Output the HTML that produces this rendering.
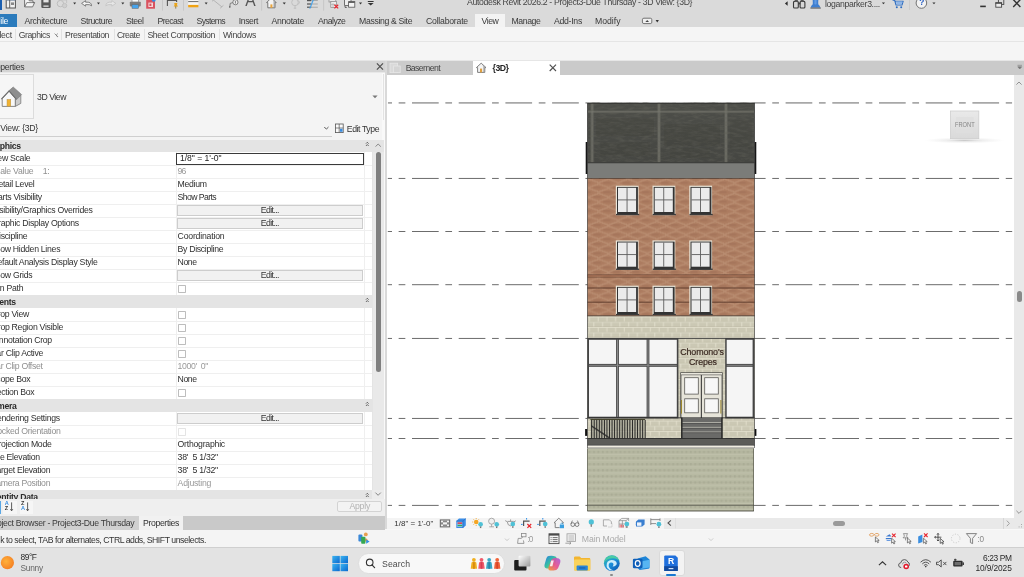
<!DOCTYPE html>
<html><head><meta charset="utf-8"><title>Revit</title>
<style>
html,body{margin:0;padding:0}
body{width:1024px;height:577px;overflow:hidden;position:relative;background:#f5f5f5;font-family:"Liberation Sans",sans-serif;}
.t{position:absolute;white-space:pre;display:block}
.b{position:absolute}
svg{position:absolute;left:0;top:0;overflow:visible}
</style></head><body><div id="root" style="position:absolute;left:0;top:0;width:1024px;height:577px;will-change:transform">
<div class="b" style="left:0px;top:0px;width:1024px;height:27px;background:#dadada;"></div>
<div class="b" style="left:0px;top:0px;width:1.5px;height:10px;background:#1b5fb0;"></div>
<div class="b" style="left:0px;top:14px;width:17px;height:13px;background:#2b7bbc;"></div>
<div class="b" style="left:475px;top:14px;width:30px;height:13px;background:#f3f3f3;"></div>
<div class="b" style="left:0px;top:27px;width:1024px;height:33px;background:#f5f5f5;"></div>
<div class="b" style="left:0px;top:41px;width:1024px;height:1.4px;background:#e5e5e5;"></div>
<div class="b" style="left:14.6px;top:29px;width:1px;height:11px;background:#e2e2e2;"></div>
<div class="b" style="left:61.3px;top:29px;width:1px;height:11px;background:#e2e2e2;"></div>
<div class="b" style="left:113.6px;top:29px;width:1px;height:11px;background:#e2e2e2;"></div>
<div class="b" style="left:143.7px;top:29px;width:1px;height:11px;background:#e2e2e2;"></div>
<div class="b" style="left:219.4px;top:29px;width:1px;height:11px;background:#e2e2e2;"></div>
<div class="b" style="left:0px;top:60px;width:1024px;height:1px;background:#e6e6e6;"></div>
<div class="b" style="left:0px;top:61px;width:385px;height:11.4px;background:#d4d4d4;"></div>
<div class="b" style="left:0px;top:72.4px;width:385px;height:1px;background:#e8e8e8;"></div>
<div class="b" style="left:384.8px;top:61px;width:2.2px;height:469px;background:#d9d9d9;"></div>
<div class="b" style="left:387px;top:61px;width:637px;height:13.7px;background:#cacaca;"></div>
<div class="b" style="left:387px;top:61px;width:86px;height:13.7px;background:#cbcbcb;"></div>
<div class="b" style="left:472.9px;top:61.4px;width:87px;height:13.4px;background:#ffffff;"></div>
<div class="b" style="left:0px;top:73px;width:385px;height:443px;background:#f4f4f4;"></div>
<div class="b" style="left:0px;top:74.2px;width:33.6px;height:44.4px;background:#f6f6f6;border:1px solid #dcdcdc;border-left:none;box-sizing:border-box"></div>
<div class="b" style="left:382.4px;top:73.4px;width:2.4px;height:443px;background:#f9f9f9;"></div>
<div class="b" style="left:383px;top:74px;width:0.8px;height:46px;background:#e2e2e2;"></div>
<div class="b" style="left:0px;top:136px;width:332px;height:1px;background:#cfcfcf;"></div>
<div class="b" style="left:0px;top:140px;width:372px;height:350px;background:#ffffff;"></div>
<div class="b" style="left:372px;top:140px;width:12px;height:359px;background:#e9e9e9;"></div>
<div class="b" style="left:0px;top:140px;width:384px;height:11.5px;background:#e4e4e4;"></div>
<div class="b" style="left:0;top:139px;width:385px;height:360px;overflow:hidden">
<div class="b" style="left:175.8px;top:12px;width:0.8px;height:339px;background:#efefef;"></div>
<div class="b" style="left:363.8px;top:12px;width:0.8px;height:339px;background:#efefef;"></div>
<div class="b" style="left:371.6px;top:12px;width:0.8px;height:339px;background:#e4e4e4;"></div>
<div class="b" style="left:0px;top:1.3px;width:372px;height:11.4px;background:#e4e4e4;"></div>
<span class="t" style="left:-14.35px;top:1.14px;font-size:8.7px;line-height:12.18px;letter-spacing:-0.320px;color:#2b2b2b;font-weight:bold;">Graphics</span>
<svg width="385" height="360"><path d="M366.0 4.6 L367.3 3.3 L368.6 4.6 M366.0 6.9 L367.3 5.6 L368.6 6.9" fill="none" stroke="#444" stroke-width="0.85"/></svg>
<div class="b" style="left:0px;top:26.2px;width:372px;height:0.8px;background:#efefef;"></div>
<span class="t" style="left:-9.68px;top:13.14px;font-size:8.7px;line-height:12.18px;letter-spacing:-0.280px;color:#2f2f2f;">View Scale</span>
<div class="b" style="left:176.3px;top:13.5px;width:187.5px;height:12.2px;background:#fff;border:1px solid #3a3a3a;box-sizing:border-box"></div>
<span class="t" style="left:180.00px;top:13.41px;font-size:8.6px;line-height:12.04px;letter-spacing:-0.036px;color:#222;">1/8" = 1'-0"</span>
<div class="b" style="left:0px;top:39.2px;width:372px;height:0.8px;background:#efefef;"></div>
<span class="t" style="left:-9.41px;top:26.14px;font-size:8.7px;line-height:12.18px;letter-spacing:-0.280px;color:#8f8f8f;">Scale Value</span>
<span class="t" style="left:42.80px;top:26.14px;font-size:8.7px;line-height:12.18px;letter-spacing:-0.280px;color:#8f8f8f;">1:</span>
<span class="t" style="left:177.60px;top:26.14px;font-size:8.7px;line-height:12.18px;letter-spacing:-0.889px;color:#9a9a9a;">96</span>
<div class="b" style="left:0px;top:52.2px;width:372px;height:0.8px;background:#efefef;"></div>
<span class="t" style="left:-7.60px;top:39.14px;font-size:8.7px;line-height:12.18px;letter-spacing:-0.280px;color:#2f2f2f;">Detail Level</span>
<span class="t" style="left:177.60px;top:39.14px;font-size:8.7px;line-height:12.18px;letter-spacing:-0.324px;color:#2f2f2f;">Medium</span>
<div class="b" style="left:0px;top:65.2px;width:372px;height:0.8px;background:#efefef;"></div>
<span class="t" style="left:-7.51px;top:52.14px;font-size:8.7px;line-height:12.18px;letter-spacing:-0.280px;color:#2f2f2f;">Parts Visibility</span>
<span class="t" style="left:177.60px;top:52.14px;font-size:8.7px;line-height:12.18px;letter-spacing:-0.589px;color:#2f2f2f;">Show Parts</span>
<div class="b" style="left:0px;top:78.2px;width:372px;height:0.8px;background:#efefef;"></div>
<span class="t" style="left:-7.81px;top:65.14px;font-size:8.7px;line-height:12.18px;letter-spacing:-0.280px;color:#2f2f2f;">Visibility/Graphics Overrides</span>
<div class="b" style="left:177.4px;top:66.4px;width:185.4px;height:10.8px;background:#f1f1f1;border:1px solid #cdcdcd;box-sizing:border-box"></div>
<span class="t" style="left:260.70px;top:65.14px;font-size:8.7px;line-height:12.18px;letter-spacing:-0.563px;color:#333;">Edit...</span>
<div class="b" style="left:0px;top:91.2px;width:372px;height:0.8px;background:#efefef;"></div>
<span class="t" style="left:-8.37px;top:78.14px;font-size:8.7px;line-height:12.18px;letter-spacing:-0.280px;color:#2f2f2f;">Graphic Display Options</span>
<div class="b" style="left:177.4px;top:79.4px;width:185.4px;height:10.8px;background:#f1f1f1;border:1px solid #cdcdcd;box-sizing:border-box"></div>
<span class="t" style="left:260.70px;top:78.14px;font-size:8.7px;line-height:12.18px;letter-spacing:-0.563px;color:#333;">Edit...</span>
<div class="b" style="left:0px;top:104.2px;width:372px;height:0.8px;background:#efefef;"></div>
<span class="t" style="left:-7.03px;top:91.14px;font-size:8.7px;line-height:12.18px;letter-spacing:-0.280px;color:#2f2f2f;">Discipline</span>
<span class="t" style="left:177.60px;top:91.14px;font-size:8.7px;line-height:12.18px;letter-spacing:-0.203px;color:#2f2f2f;">Coordination</span>
<div class="b" style="left:0px;top:117.2px;width:372px;height:0.8px;background:#efefef;"></div>
<span class="t" style="left:-9.91px;top:104.14px;font-size:8.7px;line-height:12.18px;letter-spacing:-0.280px;color:#2f2f2f;">Show Hidden Lines</span>
<span class="t" style="left:177.60px;top:104.14px;font-size:8.7px;line-height:12.18px;letter-spacing:-0.315px;color:#2f2f2f;">By Discipline</span>
<div class="b" style="left:0px;top:130.2px;width:372px;height:0.8px;background:#efefef;"></div>
<span class="t" style="left:-8.50px;top:117.14px;font-size:8.7px;line-height:12.18px;letter-spacing:-0.280px;color:#2f2f2f;">Default Analysis Display Style</span>
<span class="t" style="left:177.60px;top:117.14px;font-size:8.7px;line-height:12.18px;letter-spacing:-0.425px;color:#2f2f2f;">None</span>
<div class="b" style="left:0px;top:143.2px;width:372px;height:0.8px;background:#efefef;"></div>
<span class="t" style="left:-9.77px;top:130.14px;font-size:8.7px;line-height:12.18px;letter-spacing:-0.280px;color:#2f2f2f;">Show Grids</span>
<div class="b" style="left:177.4px;top:131.4px;width:185.4px;height:10.8px;background:#f1f1f1;border:1px solid #cdcdcd;box-sizing:border-box"></div>
<span class="t" style="left:260.70px;top:130.14px;font-size:8.7px;line-height:12.18px;letter-spacing:-0.563px;color:#333;">Edit...</span>
<div class="b" style="left:0px;top:156.2px;width:372px;height:0.8px;background:#efefef;"></div>
<span class="t" style="left:-10.26px;top:143.14px;font-size:8.7px;line-height:12.18px;letter-spacing:-0.280px;color:#2f2f2f;">Sun Path</span>
<div class="b" style="left:178.2px;top:145.8px;width:7.8px;height:7.8px;background:#fff;border:0.9px solid #bdbdbd;box-sizing:border-box;border-radius:0.8px"></div>
<div class="b" style="left:0px;top:156.4px;width:372px;height:12.3px;background:#e4e4e4;"></div>
<span class="t" style="left:-13.39px;top:157.14px;font-size:8.7px;line-height:12.18px;letter-spacing:-0.320px;color:#2b2b2b;font-weight:bold;">Extents</span>
<svg width="385" height="360"><path d="M366.0 160.6 L367.3 159.3 L368.6 160.6 M366.0 162.9 L367.3 161.6 L368.6 162.9" fill="none" stroke="#444" stroke-width="0.85"/></svg>
<div class="b" style="left:0px;top:182.2px;width:372px;height:0.8px;background:#efefef;"></div>
<span class="t" style="left:-8.36px;top:169.14px;font-size:8.7px;line-height:12.18px;letter-spacing:-0.280px;color:#2f2f2f;">Crop View</span>
<div class="b" style="left:178.2px;top:171.8px;width:7.8px;height:7.8px;background:#fff;border:0.9px solid #bdbdbd;box-sizing:border-box;border-radius:0.8px"></div>
<div class="b" style="left:0px;top:195.2px;width:372px;height:0.8px;background:#efefef;"></div>
<span class="t" style="left:-8.22px;top:182.14px;font-size:8.7px;line-height:12.18px;letter-spacing:-0.280px;color:#2f2f2f;">Crop Region Visible</span>
<div class="b" style="left:178.2px;top:184.8px;width:7.8px;height:7.8px;background:#fff;border:0.9px solid #bdbdbd;box-sizing:border-box;border-radius:0.8px"></div>
<div class="b" style="left:0px;top:208.2px;width:372px;height:0.8px;background:#efefef;"></div>
<span class="t" style="left:-6.68px;top:195.14px;font-size:8.7px;line-height:12.18px;letter-spacing:-0.280px;color:#2f2f2f;">Annotation Crop</span>
<div class="b" style="left:178.2px;top:197.8px;width:7.8px;height:7.8px;background:#fff;border:0.9px solid #bdbdbd;box-sizing:border-box;border-radius:0.8px"></div>
<div class="b" style="left:0px;top:221.2px;width:372px;height:0.8px;background:#efefef;"></div>
<span class="t" style="left:-8.68px;top:208.14px;font-size:8.7px;line-height:12.18px;letter-spacing:-0.280px;color:#2f2f2f;">Far Clip Active</span>
<div class="b" style="left:178.2px;top:210.8px;width:7.8px;height:7.8px;background:#fff;border:0.9px solid #bdbdbd;box-sizing:border-box;border-radius:0.8px"></div>
<div class="b" style="left:0px;top:234.2px;width:372px;height:0.8px;background:#efefef;"></div>
<span class="t" style="left:-8.92px;top:221.14px;font-size:8.7px;line-height:12.18px;letter-spacing:-0.280px;color:#8f8f8f;">Far Clip Offset</span>
<span class="t" style="left:177.60px;top:221.14px;font-size:8.7px;line-height:12.18px;letter-spacing:-0.386px;color:#9a9a9a;">1000'  0"</span>
<div class="b" style="left:0px;top:247.2px;width:372px;height:0.8px;background:#efefef;"></div>
<span class="t" style="left:-9.16px;top:234.14px;font-size:8.7px;line-height:12.18px;letter-spacing:-0.280px;color:#2f2f2f;">Scope Box</span>
<span class="t" style="left:177.60px;top:234.14px;font-size:8.7px;line-height:12.18px;letter-spacing:-0.425px;color:#2f2f2f;">None</span>
<div class="b" style="left:0px;top:260.2px;width:372px;height:0.8px;background:#efefef;"></div>
<span class="t" style="left:-8.85px;top:247.14px;font-size:8.7px;line-height:12.18px;letter-spacing:-0.280px;color:#2f2f2f;">Section Box</span>
<div class="b" style="left:178.2px;top:249.8px;width:7.8px;height:7.8px;background:#fff;border:0.9px solid #bdbdbd;box-sizing:border-box;border-radius:0.8px"></div>
<div class="b" style="left:0px;top:260.4px;width:372px;height:12.3px;background:#e4e4e4;"></div>
<span class="t" style="left:-13.40px;top:261.14px;font-size:8.7px;line-height:12.18px;letter-spacing:-0.320px;color:#2b2b2b;font-weight:bold;">Camera</span>
<svg width="385" height="360"><path d="M366.0 264.6 L367.3 263.3 L368.6 264.6 M366.0 266.9 L367.3 265.6 L368.6 266.9" fill="none" stroke="#444" stroke-width="0.85"/></svg>
<div class="b" style="left:0px;top:286.2px;width:372px;height:0.8px;background:#efefef;"></div>
<span class="t" style="left:-9.06px;top:273.14px;font-size:8.7px;line-height:12.18px;letter-spacing:-0.280px;color:#2f2f2f;">Rendering Settings</span>
<div class="b" style="left:177.4px;top:274.4px;width:185.4px;height:10.8px;background:#f1f1f1;border:1px solid #cdcdcd;box-sizing:border-box"></div>
<span class="t" style="left:260.70px;top:273.14px;font-size:8.7px;line-height:12.18px;letter-spacing:-0.563px;color:#333;">Edit...</span>
<div class="b" style="left:0px;top:299.2px;width:372px;height:0.8px;background:#efefef;"></div>
<span class="t" style="left:-7.29px;top:286.14px;font-size:8.7px;line-height:12.18px;letter-spacing:-0.280px;color:#8f8f8f;">Locked Orientation</span>
<div class="b" style="left:178.2px;top:288.8px;width:7.8px;height:7.8px;background:#fff;border:0.9px solid #e4e4e4;box-sizing:border-box;border-radius:0.8px"></div>
<div class="b" style="left:0px;top:312.2px;width:372px;height:0.8px;background:#efefef;"></div>
<span class="t" style="left:-7.07px;top:299.14px;font-size:8.7px;line-height:12.18px;letter-spacing:-0.280px;color:#2f2f2f;">Projection Mode</span>
<span class="t" style="left:177.60px;top:299.14px;font-size:8.7px;line-height:12.18px;letter-spacing:-0.241px;color:#2f2f2f;">Orthographic</span>
<div class="b" style="left:0px;top:325.2px;width:372px;height:0.8px;background:#efefef;"></div>
<span class="t" style="left:-9.66px;top:312.14px;font-size:8.7px;line-height:12.18px;letter-spacing:-0.280px;color:#2f2f2f;">Eye Elevation</span>
<span class="t" style="left:177.60px;top:312.14px;font-size:8.7px;line-height:12.18px;letter-spacing:-0.262px;color:#2f2f2f;">38'  5 1/32"</span>
<div class="b" style="left:0px;top:338.2px;width:372px;height:0.8px;background:#efefef;"></div>
<span class="t" style="left:-7.61px;top:325.14px;font-size:8.7px;line-height:12.18px;letter-spacing:-0.280px;color:#2f2f2f;">Target Elevation</span>
<span class="t" style="left:177.60px;top:325.14px;font-size:8.7px;line-height:12.18px;letter-spacing:-0.262px;color:#2f2f2f;">38'  5 1/32"</span>
<div class="b" style="left:0px;top:351.2px;width:372px;height:0.8px;background:#efefef;"></div>
<span class="t" style="left:-9.81px;top:338.14px;font-size:8.7px;line-height:12.18px;letter-spacing:-0.280px;color:#8f8f8f;">Camera Position</span>
<span class="t" style="left:177.60px;top:338.14px;font-size:8.7px;line-height:12.18px;letter-spacing:-0.243px;color:#9a9a9a;">Adjusting</span>
<div class="b" style="left:0px;top:351.4px;width:372px;height:12.3px;background:#e4e4e4;"></div>
<span class="t" style="left:-10.25px;top:352.14px;font-size:8.7px;line-height:12.18px;letter-spacing:-0.320px;color:#2b2b2b;font-weight:bold;">Identity Data</span>
<svg width="385" height="360"><path d="M366.0 355.6 L367.3 354.3 L368.6 355.6 M366.0 357.9 L367.3 356.6 L368.6 357.9" fill="none" stroke="#444" stroke-width="0.85"/></svg>
</div>
<div class="b" style="left:372px;top:140px;width:12px;height:11.5px;background:#e4e4e4;"></div>
<div class="b" style="left:375.6px;top:151.6px;width:5.2px;height:220.4px;background:#7f7f7f;border-radius:2.6px"></div>
<div class="b" style="left:372px;top:490px;width:12px;height:9px;background:#ececec;"></div>
<svg width="1024" height="577"><path d="M375.6 146.6 L378.2 144 L380.8 146.6" fill="none" stroke="#777" stroke-width="0.9"/><path d="M375.4 492.6 L378.1 495.3 L380.8 492.6" fill="none" stroke="#777" stroke-width="0.9"/></svg>
<div class="b" style="left:0px;top:499px;width:385px;height:17px;background:#efefef;"></div>
<div class="b" style="left:0px;top:500.5px;width:1.2px;height:13px;background:#5aa7e4;"></div>
<div class="b" style="left:3px;top:500.5px;width:13.5px;height:13px;background:#f6f6f6;"></div>
<div class="b" style="left:19.5px;top:500.5px;width:13.5px;height:13px;background:#f6f6f6;"></div>
<div class="b" style="left:337.4px;top:500.6px;width:44.2px;height:11.8px;background:#f3f3f3;border:1px solid #d3d3d3;box-sizing:border-box;border-radius:2px"></div>
<span class="t" style="left:349.50px;top:500.34px;font-size:8.7px;line-height:12.18px;letter-spacing:-0.253px;color:#b3b3b3;">Apply</span>
<div class="b" style="left:0px;top:516px;width:385px;height:14px;background:#c9c9c9;"></div>
<div class="b" style="left:0px;top:516px;width:138.7px;height:14px;background:#d0d0d0;"></div>
<div class="b" style="left:138.7px;top:516px;width:44.5px;height:14px;background:#f1f1f1;"></div>
<span class="t" style="left:-11.07px;top:516.54px;font-size:8.7px;line-height:12.18px;letter-spacing:-0.330px;color:#3a3a3a;">Project Browser - Project3-Due Thursday</span>
<span class="t" style="left:143.00px;top:516.54px;font-size:8.7px;line-height:12.18px;letter-spacing:-0.365px;color:#2f2f2f;">Properties</span>
<span class="t" style="left:-12.45px;top:61.04px;font-size:8.7px;line-height:12.18px;letter-spacing:-0.280px;color:#333;">Properties</span>
<span class="t" style="left:37.10px;top:90.74px;font-size:8.7px;line-height:12.18px;letter-spacing:-0.477px;color:#333;">3D View</span>
<span class="t" style="left:-12.37px;top:122.34px;font-size:8.7px;line-height:12.18px;letter-spacing:-0.280px;color:#333;">3D View: {3D}</span>
<span class="t" style="left:346.80px;top:122.54px;font-size:8.7px;line-height:12.18px;letter-spacing:-0.413px;color:#333;">Edit Type</span>
<span class="t" style="left:467.00px;top:-4.36px;font-size:8.7px;line-height:12.18px;letter-spacing:-0.341px;color:#444;">Autodesk Revit 2026.2 - Project3-Due Thursday - 3D View: {3D}</span>
<span class="t" style="left:825.00px;top:-1.86px;font-size:8.7px;line-height:12.18px;letter-spacing:-0.341px;color:#444;">loganparker3....</span>
<span class="t" style="left:24.40px;top:14.94px;font-size:8.7px;line-height:12.18px;letter-spacing:-0.277px;color:#3a3a3a;">Architecture</span>
<span class="t" style="left:80.60px;top:14.94px;font-size:8.7px;line-height:12.18px;letter-spacing:-0.422px;color:#3a3a3a;">Structure</span>
<span class="t" style="left:126.00px;top:14.94px;font-size:8.7px;line-height:12.18px;letter-spacing:-0.486px;color:#3a3a3a;">Steel</span>
<span class="t" style="left:157.50px;top:14.94px;font-size:8.7px;line-height:12.18px;letter-spacing:-0.599px;color:#3a3a3a;">Precast</span>
<span class="t" style="left:196.60px;top:14.94px;font-size:8.7px;line-height:12.18px;letter-spacing:-0.708px;color:#3a3a3a;">Systems</span>
<span class="t" style="left:238.75px;top:14.94px;font-size:8.7px;line-height:12.18px;letter-spacing:-0.435px;color:#3a3a3a;">Insert</span>
<span class="t" style="left:271.50px;top:14.94px;font-size:8.7px;line-height:12.18px;letter-spacing:-0.291px;color:#3a3a3a;">Annotate</span>
<span class="t" style="left:318.00px;top:14.94px;font-size:8.7px;line-height:12.18px;letter-spacing:-0.493px;color:#3a3a3a;">Analyze</span>
<span class="t" style="left:359.00px;top:14.94px;font-size:8.7px;line-height:12.18px;letter-spacing:-0.341px;color:#3a3a3a;">Massing &amp; Site</span>
<span class="t" style="left:426.00px;top:14.94px;font-size:8.7px;line-height:12.18px;letter-spacing:-0.227px;color:#3a3a3a;">Collaborate</span>
<span class="t" style="left:481.50px;top:14.94px;font-size:8.7px;line-height:12.18px;letter-spacing:-0.425px;color:#3a3a3a;">View</span>
<span class="t" style="left:511.50px;top:14.94px;font-size:8.7px;line-height:12.18px;letter-spacing:-0.407px;color:#3a3a3a;">Manage</span>
<span class="t" style="left:554.00px;top:14.94px;font-size:8.7px;line-height:12.18px;letter-spacing:-0.283px;color:#3a3a3a;">Add-Ins</span>
<span class="t" style="left:595.00px;top:14.94px;font-size:8.7px;line-height:12.18px;letter-spacing:-0.021px;color:#3a3a3a;">Modify</span>
<span class="t" style="left:-4.80px;top:14.94px;font-size:8.7px;line-height:12.18px;letter-spacing:-0.280px;color:#ffffff;">File</span>
<span class="t" style="left:18.80px;top:29.04px;font-size:8.7px;line-height:12.18px;letter-spacing:-0.477px;color:#444;">Graphics</span>
<span class="t" style="left:65.00px;top:29.04px;font-size:8.7px;line-height:12.18px;letter-spacing:-0.396px;color:#444;">Presentation</span>
<span class="t" style="left:117.00px;top:29.04px;font-size:8.7px;line-height:12.18px;letter-spacing:-0.552px;color:#444;">Create</span>
<span class="t" style="left:147.40px;top:29.04px;font-size:8.7px;line-height:12.18px;letter-spacing:-0.342px;color:#444;">Sheet Composition</span>
<span class="t" style="left:223.00px;top:29.04px;font-size:8.7px;line-height:12.18px;letter-spacing:-0.328px;color:#444;">Windows</span>
<span class="t" style="left:-10.70px;top:29.04px;font-size:8.7px;line-height:12.18px;letter-spacing:-0.280px;color:#444;">Select</span>
<svg width="1024" height="577"><path d="M54.6 33.6 L56.2 35.2 L57.8 33.6 M57.8 36.9 L56 35.3 M56.4 35.3 L57.9 36.8" fill="none" stroke="#666" stroke-width="0.7"/></svg>
<span class="t" style="left:405.70px;top:62.04px;font-size:8.7px;line-height:12.18px;letter-spacing:-0.609px;color:#444;">Basement</span>
<span class="t" style="left:492.60px;top:62.04px;font-size:8.7px;line-height:12.18px;letter-spacing:-0.548px;color:#222;font-weight:bold;">{3D}</span>
<svg width="1024" height="577"><path d="M376.9 63.4 L383 69.7 M383 63.4 L376.9 69.7" stroke="#505050" stroke-width="1.2" fill="none"/><path d="M549.7 64.6 L556 71 M556 64.6 L549.7 71" stroke="#505050" stroke-width="1.15" fill="none"/><path d="M372.4 95.6 L377.6 95.6 L375 98.3 Z" fill="#777"/><path d="M324.3 127 L326.4 129.1 L328.5 127" stroke="#555" stroke-width="1" fill="none"/><path d="M1017.5 65.3 L1022 65.3 M1017.8 66.8 L1021.7 66.8 L1019.75 69 Z" stroke="#777" stroke-width="0.6" fill="#777"/></svg>
<div class="b" style="left:387px;top:74.5px;width:627px;height:443px;background:#ffffff;"></div>
<div class="b" style="left:1013.6px;top:74.5px;width:10.4px;height:454.4px;background:#e9e9e9;"></div>
<div class="b" style="left:664px;top:517.5px;width:350px;height:11.4px;background:#e9e9e9;"></div>
<div class="b" style="left:387px;top:517.5px;width:277px;height:11.4px;background:#f4f4f4;"></div>
<div class="b" style="left:1002.6px;top:518px;width:0.8px;height:11px;background:#d6d6d6;"></div>
<div class="b" style="left:833px;top:520.5px;width:11.8px;height:5.2px;background:#9a9a9a;border-radius:2.6px"></div>
<div class="b" style="left:1016.9px;top:290.8px;width:5.0px;height:11.4px;background:#8a8a8a;border-radius:2.5px"></div>
<svg width="1024" height="577"><path d="M1016.4 84.6 L1019 82 L1021.6 84.6" fill="none" stroke="#888" stroke-width="0.9"/><path d="M1016.4 510.8 L1019 513.4 L1021.6 510.8" fill="none" stroke="#888" stroke-width="0.9"/><path d="M670.9 520.4 L668 523 L670.9 525.6" fill="none" stroke="#555" stroke-width="1.1"/><rect x="675" y="518" width="0.8" height="10.4" fill="#dcdcdc"/><path d="M1006.8 520.6 L1009.4 523.4 L1006.8 526.2" fill="none" stroke="#999" stroke-width="0.9"/><g fill="#aaa"><rect x="1021" y="524" width="1" height="1"/><rect x="1021" y="526.4" width="1" height="1"/><rect x="1018.6" y="526.4" width="1" height="1"/></g></svg>
<svg width="1024" height="577"><defs><clipPath id="vc"><rect x="387.8" y="75" width="624.6" height="442"/></clipPath></defs><g clip-path="url(#vc)">
<defs><clipPath id="vc2"><rect x="387.8" y="75" width="199.5" height="442"/><rect x="754.7" y="75" width="257.7" height="442"/></clipPath></defs><g clip-path="url(#vc2)"><path d="M365.3 102.92 H1060" stroke="#a8a8a8" stroke-width="1.85" stroke-dasharray="26.7 6.65 6.7 6.65" fill="none"/></g>
<path d="M365.3 178.45 H1060" stroke="#6c6c6c" stroke-width="1.0" stroke-dasharray="26.7 6.65 6.7 6.65" fill="none"/>
<path d="M365.3 231.5 H1060" stroke="#6c6c6c" stroke-width="1.0" stroke-dasharray="26.7 6.65 6.7 6.65" fill="none"/>
<path d="M365.3 284.7 H1060" stroke="#6c6c6c" stroke-width="1.0" stroke-dasharray="26.7 6.65 6.7 6.65" fill="none"/>
<path d="M365.3 338.45 H1060" stroke="#6c6c6c" stroke-width="1.0" stroke-dasharray="26.7 6.65 6.7 6.65" fill="none"/>
<path d="M365.3 418.45 H1060" stroke="#6c6c6c" stroke-width="1.0" stroke-dasharray="26.7 6.65 6.7 6.65" fill="none"/>
<path d="M365.3 438.5 H1060" stroke="#6c6c6c" stroke-width="1.0" stroke-dasharray="26.7 6.65 6.7 6.65" fill="none"/>
<path d="M365.3 505.4 H1060" stroke="#6c6c6c" stroke-width="1.0" stroke-dasharray="26.7 6.65 6.7 6.65" fill="none"/>
</g></svg>
<svg width="1024" height="577" shape-rendering="auto"><defs><pattern id="brick" width="19.4" height="9.4" patternUnits="userSpaceOnUse" patternTransform="translate(587.3 178)"><rect width="19.4" height="9.4" fill="#ad7d61"/><rect x="-2.43" y="1.28" width="3.4" height="1.35" fill="#c0957a" opacity=".5"/><rect x="-2.43" y="-8.12" width="3.4" height="1.35" fill="#c0957a" opacity=".5"/><rect x="-2.43" y="10.68" width="3.4" height="1.35" fill="#c0957a" opacity=".5"/><rect x="-2.43" y="7.92" width="3.4" height="1.35" fill="#c0957a" opacity=".5"/><rect x="-2.43" y="-1.48" width="3.4" height="1.35" fill="#c0957a" opacity=".5"/><rect x="-2.43" y="17.32" width="3.4" height="1.35" fill="#c0957a" opacity=".5"/><rect x="0.00" y="0.40" width="3.4" height="1.35" fill="#c0957a" opacity=".5"/><rect x="0.00" y="-9.00" width="3.4" height="1.35" fill="#c0957a" opacity=".5"/><rect x="0.00" y="9.80" width="3.4" height="1.35" fill="#c0957a" opacity=".5"/><rect x="0.00" y="8.80" width="3.4" height="1.35" fill="#c0957a" opacity=".5"/><rect x="0.00" y="-0.60" width="3.4" height="1.35" fill="#c0957a" opacity=".5"/><rect x="0.00" y="18.20" width="3.4" height="1.35" fill="#c0957a" opacity=".5"/><rect x="2.43" y="1.28" width="3.4" height="1.35" fill="#c0957a" opacity=".5"/><rect x="2.43" y="-8.12" width="3.4" height="1.35" fill="#c0957a" opacity=".5"/><rect x="2.43" y="10.68" width="3.4" height="1.35" fill="#c0957a" opacity=".5"/><rect x="2.43" y="7.92" width="3.4" height="1.35" fill="#c0957a" opacity=".5"/><rect x="2.43" y="-1.48" width="3.4" height="1.35" fill="#c0957a" opacity=".5"/><rect x="2.43" y="17.32" width="3.4" height="1.35" fill="#c0957a" opacity=".5"/><rect x="4.86" y="2.15" width="3.4" height="1.35" fill="#c0957a" opacity=".5"/><rect x="4.86" y="-7.25" width="3.4" height="1.35" fill="#c0957a" opacity=".5"/><rect x="4.86" y="11.55" width="3.4" height="1.35" fill="#c0957a" opacity=".5"/><rect x="4.86" y="7.05" width="3.4" height="1.35" fill="#c0957a" opacity=".5"/><rect x="4.86" y="-2.35" width="3.4" height="1.35" fill="#c0957a" opacity=".5"/><rect x="4.86" y="16.45" width="3.4" height="1.35" fill="#c0957a" opacity=".5"/><rect x="7.29" y="3.03" width="3.4" height="1.35" fill="#c0957a" opacity=".5"/><rect x="7.29" y="-6.37" width="3.4" height="1.35" fill="#c0957a" opacity=".5"/><rect x="7.29" y="12.43" width="3.4" height="1.35" fill="#c0957a" opacity=".5"/><rect x="7.29" y="6.17" width="3.4" height="1.35" fill="#c0957a" opacity=".5"/><rect x="7.29" y="-3.23" width="3.4" height="1.35" fill="#c0957a" opacity=".5"/><rect x="7.29" y="15.57" width="3.4" height="1.35" fill="#c0957a" opacity=".5"/><rect x="9.72" y="3.89" width="3.4" height="1.35" fill="#c0957a" opacity=".5"/><rect x="9.72" y="-5.51" width="3.4" height="1.35" fill="#c0957a" opacity=".5"/><rect x="9.72" y="13.29" width="3.4" height="1.35" fill="#c0957a" opacity=".5"/><rect x="9.72" y="5.31" width="3.4" height="1.35" fill="#c0957a" opacity=".5"/><rect x="9.72" y="-4.09" width="3.4" height="1.35" fill="#c0957a" opacity=".5"/><rect x="9.72" y="14.71" width="3.4" height="1.35" fill="#c0957a" opacity=".5"/><rect x="12.15" y="3.02" width="3.4" height="1.35" fill="#c0957a" opacity=".5"/><rect x="12.15" y="-6.38" width="3.4" height="1.35" fill="#c0957a" opacity=".5"/><rect x="12.15" y="12.42" width="3.4" height="1.35" fill="#c0957a" opacity=".5"/><rect x="12.15" y="6.18" width="3.4" height="1.35" fill="#c0957a" opacity=".5"/><rect x="12.15" y="-3.22" width="3.4" height="1.35" fill="#c0957a" opacity=".5"/><rect x="12.15" y="15.58" width="3.4" height="1.35" fill="#c0957a" opacity=".5"/><rect x="14.58" y="2.14" width="3.4" height="1.35" fill="#c0957a" opacity=".5"/><rect x="14.58" y="-7.26" width="3.4" height="1.35" fill="#c0957a" opacity=".5"/><rect x="14.58" y="11.54" width="3.4" height="1.35" fill="#c0957a" opacity=".5"/><rect x="14.58" y="7.06" width="3.4" height="1.35" fill="#c0957a" opacity=".5"/><rect x="14.58" y="-2.34" width="3.4" height="1.35" fill="#c0957a" opacity=".5"/><rect x="14.58" y="16.46" width="3.4" height="1.35" fill="#c0957a" opacity=".5"/><rect x="17.01" y="1.26" width="3.4" height="1.35" fill="#c0957a" opacity=".5"/><rect x="17.01" y="-8.14" width="3.4" height="1.35" fill="#c0957a" opacity=".5"/><rect x="17.01" y="10.66" width="3.4" height="1.35" fill="#c0957a" opacity=".5"/><rect x="17.01" y="7.94" width="3.4" height="1.35" fill="#c0957a" opacity=".5"/><rect x="17.01" y="-1.46" width="3.4" height="1.35" fill="#c0957a" opacity=".5"/><rect x="17.01" y="17.34" width="3.4" height="1.35" fill="#c0957a" opacity=".5"/><rect x="19.44" y="0.41" width="3.4" height="1.35" fill="#c0957a" opacity=".5"/><rect x="19.44" y="-8.99" width="3.4" height="1.35" fill="#c0957a" opacity=".5"/><rect x="19.44" y="9.81" width="3.4" height="1.35" fill="#c0957a" opacity=".5"/><rect x="19.44" y="8.79" width="3.4" height="1.35" fill="#c0957a" opacity=".5"/><rect x="19.44" y="-0.61" width="3.4" height="1.35" fill="#c0957a" opacity=".5"/><rect x="19.44" y="18.19" width="3.4" height="1.35" fill="#c0957a" opacity=".5"/><rect x="-3.40" y="3.65" width="6.8" height="2.4" fill="#9d6e54" opacity=".34"/><rect x="-5.60" y="4.35" width="11.2" height="1.0" fill="#9d6e54" opacity=".22"/><rect x="16.00" y="3.65" width="6.8" height="2.4" fill="#9d6e54" opacity=".34"/><rect x="13.80" y="4.35" width="11.2" height="1.0" fill="#9d6e54" opacity=".22"/><rect x="6.30" y="-1.05" width="6.8" height="2.4" fill="#9d6e54" opacity=".34"/><rect x="4.10" y="-0.35" width="11.2" height="1.0" fill="#9d6e54" opacity=".22"/><rect x="6.30" y="8.35" width="6.8" height="2.4" fill="#9d6e54" opacity=".34"/><rect x="4.10" y="9.05" width="11.2" height="1.0" fill="#9d6e54" opacity=".22"/></pattern><pattern id="stone" width="8.7" height="10.4" patternUnits="userSpaceOnUse" patternTransform="translate(587.3 316.6)"><rect width="8.7" height="10.4" fill="#cbc8b4"/><path d="M0 0.35 H8.7 M0 5.55 H8.7 M2.2 0.35 V5.55 M6.55 5.55 V10.4 M6.55 0 V0.35" stroke="#e2dfcd" stroke-width="0.9" fill="none"/><path d="M0 4.95 H8.7 M0 10.15 H8.7" stroke="#b9b6a2" stroke-width="0.5" fill="none"/></pattern><pattern id="gstone" width="8.8" height="6.1" patternUnits="userSpaceOnUse" patternTransform="translate(587.3 449)"><rect width="8.8" height="6.1" fill="#b8baa3"/><rect x="0" y="2.2" width="8.8" height="1.5" fill="#afb19a" opacity=".7"/><rect x="1.4" y="1.8" width="1.8" height="2.3" fill="#a6a892" opacity=".7"/><rect x="5.8" y="1.8" width="1.8" height="2.3" fill="#a6a892" opacity=".7"/><rect x="0" y="5.2" width="8.8" height="0.9" fill="#c0c2ab" opacity=".8"/></pattern><filter id="rnoise" x="0" y="0" width="100%" height="100%"><feTurbulence type="fractalNoise" baseFrequency="0.12 0.4" numOctaves="3" seed="7" result="n"/><feColorMatrix type="matrix" values="0 0 0 0 0.12  0 0 0 0 0.12  0 0 0 0 0.1  2.4 0 0 0 -0.95"/></filter><linearGradient id="roofg" x1="0" y1="0" x2="0" y2="1"><stop offset="0" stop-color="#4d4e49"/><stop offset="1" stop-color="#454642"/></linearGradient></defs><rect x="587.3" y="102.9" width="167.4000000000001" height="60" fill="url(#roofg)"/><rect x="590.2" y="103" width="4.0" height="59.6" fill="#707068" opacity=".35"/><rect x="591.2" y="103" width="2.0" height="59.6" fill="#7c7c73" opacity=".55"/><rect x="657.0" y="103" width="4.0" height="59.6" fill="#707068" opacity=".35"/><rect x="658.0" y="103" width="2.0" height="59.6" fill="#7c7c73" opacity=".55"/><rect x="724.0" y="103" width="4.0" height="59.6" fill="#707068" opacity=".35"/><rect x="725.0" y="103" width="2.0" height="59.6" fill="#7c7c73" opacity=".55"/><rect x="587.3" y="110.2" width="167.4000000000001" height="3.0" fill="#707068" opacity=".3"/><rect x="587.3" y="110.9" width="167.4000000000001" height="1.6" fill="#7c7c73" opacity=".5"/><rect x="587.3" y="102.9" width="167.4000000000001" height="60" fill="#000" filter="url(#rnoise)" opacity=".5"/><rect x="596" y="118" width="58" height="18" fill="#2e2f2c" opacity="0.1"/><rect x="664" y="124" width="56" height="22" fill="#2e2f2c" opacity="0.1"/><rect x="600" y="142" width="50" height="14" fill="#2e2f2c" opacity="0.08"/><rect x="670" y="148" width="40" height="10" fill="#2e2f2c" opacity="0.08"/><rect x="730" y="120" width="22" height="30" fill="#2e2f2c" opacity="0.08"/><rect x="587.3" y="102.7" width="167.4000000000001" height="0.9" fill="#2a2a28"/><rect x="587.3" y="162.8" width="167.4000000000001" height="15.4" fill="#7b7c79"/><rect x="587.3" y="162.4" width="167.4000000000001" height="0.8" fill="#2c2c2a"/><rect x="585.7" y="142" width="1.8" height="32" fill="#161616"/><rect x="754.5" y="142" width="1.8" height="32" fill="#161616"/><rect x="587.3" y="178.2" width="167.4000000000001" height="138" fill="url(#brick)"/><rect x="587.3" y="178" width="167.4000000000001" height="0.7" fill="#4a3a30"/><rect x="587.3" y="274.5" width="167.4000000000001" height="0.9" fill="#5c3a2a" opacity="0.85"/><rect x="587.3" y="276.7" width="167.4000000000001" height="0.8" fill="#5c3a2a" opacity="0.7"/><rect x="587.3" y="287.4" width="167.4000000000001" height="1.2" fill="#5c3a2a" opacity="0.8"/><rect x="587.3" y="301.6" width="167.4000000000001" height="1.2" fill="#5c3a2a" opacity="0.8"/><rect x="587.3" y="275.2" width="167.4000000000001" height="1.4" fill="#a06a50" opacity=".8"/><rect x="615.8" y="185.7" width="22.8" height="29.5" fill="#ebe7da"/><rect x="617.0" y="186.89999999999998" width="20.900000000000002" height="27.9" fill="#333333"/><rect x="618.0" y="187.79999999999998" width="18.1" height="24.2" fill="#ebebeb"/><rect x="626.5999999999999" y="187.79999999999998" width="0.9" height="24.2" fill="#5e5e5e"/><rect x="618.0" y="199.45" width="18.1" height="0.9" fill="#5e5e5e"/><rect x="616.0" y="213.89999999999998" width="23.2" height="1.3" fill="#3a3a3a"/><rect x="652.5" y="185.7" width="22.8" height="29.5" fill="#ebe7da"/><rect x="653.7" y="186.89999999999998" width="20.900000000000002" height="27.9" fill="#333333"/><rect x="654.7" y="187.79999999999998" width="18.1" height="24.2" fill="#ebebeb"/><rect x="663.3" y="187.79999999999998" width="0.9" height="24.2" fill="#5e5e5e"/><rect x="654.7" y="199.45" width="18.1" height="0.9" fill="#5e5e5e"/><rect x="652.7" y="213.89999999999998" width="23.2" height="1.3" fill="#3a3a3a"/><rect x="689.3" y="185.7" width="22.8" height="29.5" fill="#ebe7da"/><rect x="690.5" y="186.89999999999998" width="20.900000000000002" height="27.9" fill="#333333"/><rect x="691.5" y="187.79999999999998" width="18.1" height="24.2" fill="#ebebeb"/><rect x="700.0999999999999" y="187.79999999999998" width="0.9" height="24.2" fill="#5e5e5e"/><rect x="691.5" y="199.45" width="18.1" height="0.9" fill="#5e5e5e"/><rect x="689.5" y="213.89999999999998" width="23.2" height="1.3" fill="#3a3a3a"/><rect x="615.8" y="240.4" width="22.8" height="29.5" fill="#ebe7da"/><rect x="617.0" y="241.6" width="20.900000000000002" height="27.9" fill="#333333"/><rect x="618.0" y="242.5" width="18.1" height="24.2" fill="#ebebeb"/><rect x="626.5999999999999" y="242.5" width="0.9" height="24.2" fill="#5e5e5e"/><rect x="618.0" y="254.15" width="18.1" height="0.9" fill="#5e5e5e"/><rect x="616.0" y="268.59999999999997" width="23.2" height="1.3" fill="#3a3a3a"/><rect x="652.5" y="240.4" width="22.8" height="29.5" fill="#ebe7da"/><rect x="653.7" y="241.6" width="20.900000000000002" height="27.9" fill="#333333"/><rect x="654.7" y="242.5" width="18.1" height="24.2" fill="#ebebeb"/><rect x="663.3" y="242.5" width="0.9" height="24.2" fill="#5e5e5e"/><rect x="654.7" y="254.15" width="18.1" height="0.9" fill="#5e5e5e"/><rect x="652.7" y="268.59999999999997" width="23.2" height="1.3" fill="#3a3a3a"/><rect x="689.3" y="240.4" width="22.8" height="29.5" fill="#ebe7da"/><rect x="690.5" y="241.6" width="20.900000000000002" height="27.9" fill="#333333"/><rect x="691.5" y="242.5" width="18.1" height="24.2" fill="#ebebeb"/><rect x="700.0999999999999" y="242.5" width="0.9" height="24.2" fill="#5e5e5e"/><rect x="691.5" y="254.15" width="18.1" height="0.9" fill="#5e5e5e"/><rect x="689.5" y="268.59999999999997" width="23.2" height="1.3" fill="#3a3a3a"/><rect x="615.8" y="285.7" width="22.8" height="29.5" fill="#ebe7da"/><rect x="617.0" y="286.9" width="20.900000000000002" height="27.9" fill="#333333"/><rect x="618.0" y="287.8" width="18.1" height="24.2" fill="#ebebeb"/><rect x="626.5999999999999" y="287.8" width="0.9" height="24.2" fill="#5e5e5e"/><rect x="618.0" y="299.45000000000005" width="18.1" height="0.9" fill="#5e5e5e"/><rect x="616.0" y="313.9" width="23.2" height="1.3" fill="#3a3a3a"/><rect x="652.5" y="285.7" width="22.8" height="29.5" fill="#ebe7da"/><rect x="653.7" y="286.9" width="20.900000000000002" height="27.9" fill="#333333"/><rect x="654.7" y="287.8" width="18.1" height="24.2" fill="#ebebeb"/><rect x="663.3" y="287.8" width="0.9" height="24.2" fill="#5e5e5e"/><rect x="654.7" y="299.45000000000005" width="18.1" height="0.9" fill="#5e5e5e"/><rect x="652.7" y="313.9" width="23.2" height="1.3" fill="#3a3a3a"/><rect x="689.3" y="285.7" width="22.8" height="29.5" fill="#ebe7da"/><rect x="690.5" y="286.9" width="20.900000000000002" height="27.9" fill="#333333"/><rect x="691.5" y="287.8" width="18.1" height="24.2" fill="#ebebeb"/><rect x="700.0999999999999" y="287.8" width="0.9" height="24.2" fill="#5e5e5e"/><rect x="691.5" y="299.45000000000005" width="18.1" height="0.9" fill="#5e5e5e"/><rect x="689.5" y="313.9" width="23.2" height="1.3" fill="#3a3a3a"/><rect x="587.3" y="315.8" width="167.4000000000001" height="22.6" fill="url(#stone)"/><rect x="587.3" y="315.4" width="167.4000000000001" height="0.8" fill="#4d3a30"/><rect x="587.3" y="338.2" width="167.4000000000001" height="100.4" fill="url(#stone)"/><rect x="587.5" y="338.2" width="90.89999999999998" height="80.2" fill="#454545"/><rect x="589.00" y="339.8" width="27.10" height="24.1" fill="#f5f5f5"/><rect x="589.00" y="366.8" width="27.10" height="49.9" fill="#f5f5f5"/><rect x="618.90" y="339.8" width="27.70" height="24.1" fill="#f5f5f5"/><rect x="618.90" y="366.8" width="27.70" height="49.9" fill="#f5f5f5"/><rect x="649.40" y="339.8" width="27.40" height="24.1" fill="#f5f5f5"/><rect x="649.40" y="366.8" width="27.40" height="49.9" fill="#f5f5f5"/><rect x="616.95" y="339.8" width="1.1" height="77" fill="#8a8a8a"/><rect x="647.45" y="339.8" width="1.1" height="77" fill="#8a8a8a"/><rect x="589.0" y="364.8" width="87.79999999999998" height="1.0" fill="#8a8a8a"/><rect x="725.2" y="338.2" width="29.0" height="80.2" fill="#454545"/><rect x="726.70" y="339.8" width="25.90" height="24.1" fill="#f5f5f5"/><rect x="726.70" y="366.8" width="25.90" height="49.9" fill="#f5f5f5"/><rect x="726.7" y="364.8" width="25.9" height="1.0" fill="#8a8a8a"/><rect x="587.3" y="337.9" width="167.4000000000001" height="0.9" fill="#3a3a3a"/><rect x="680.3" y="372.3" width="42.4" height="45.9" fill="#4a4a48"/><rect x="681.0" y="373.0" width="41.0" height="1.6" fill="#e9e7dc"/><rect x="681.4" y="375.2" width="19.4" height="43" fill="#e6e4d9"/><rect x="702.0" y="375.2" width="19.6" height="43" fill="#e6e4d9"/><rect x="684.3" y="377.3" width="14.4" height="17.2" fill="#5a5a58"/><rect x="685.0999999999999" y="378.1" width="12.8" height="15.6" fill="#f7f7f7"/><rect x="684.3" y="398.4" width="14.4" height="14.8" fill="#5a5a58"/><rect x="685.0999999999999" y="399.2" width="12.8" height="13.200000000000001" fill="#f7f7f7"/><rect x="704.3" y="377.3" width="14.4" height="17.2" fill="#5a5a58"/><rect x="705.0999999999999" y="378.1" width="12.8" height="15.6" fill="#f7f7f7"/><rect x="704.3" y="398.4" width="14.4" height="14.8" fill="#5a5a58"/><rect x="705.0999999999999" y="399.2" width="12.8" height="13.200000000000001" fill="#f7f7f7"/><rect x="681.0" y="400" width="1.0" height="13.6" fill="#9c872c"/><rect x="720.4" y="400" width="1.0" height="13.6" fill="#9c872c"/><rect x="587.3" y="417.4" width="167.4000000000001" height="0.9" fill="#2e2e2e"/><rect x="681.6" y="418" width="40.6" height="20.6" fill="#6a6a68"/><rect x="682.4" y="422.3" width="39" height="0.9" fill="#c9c8bd"/><rect x="682.4" y="423.2" width="39" height="0.6" fill="#3c3c3c"/><rect x="682.4" y="426.9" width="39" height="0.9" fill="#c9c8bd"/><rect x="682.4" y="427.79999999999995" width="39" height="0.6" fill="#3c3c3c"/><rect x="682.4" y="431.6" width="39" height="0.9" fill="#c9c8bd"/><rect x="682.4" y="432.5" width="39" height="0.6" fill="#3c3c3c"/><rect x="681.2" y="417.6" width="1.2" height="21" fill="#121212"/><rect x="721.4" y="417.6" width="1.2" height="21" fill="#121212"/><rect x="590.6" y="419.4" width="54.2" height="19.2" fill="#9b9a8d" opacity=".55"/><rect x="591.20" y="419.8" width="0.9" height="18.8" fill="#1c1c1c"/><rect x="593.75" y="419.8" width="0.9" height="18.8" fill="#1c1c1c"/><rect x="596.30" y="419.8" width="0.9" height="18.8" fill="#1c1c1c"/><rect x="598.85" y="419.8" width="0.9" height="18.8" fill="#1c1c1c"/><rect x="601.40" y="419.8" width="0.9" height="18.8" fill="#1c1c1c"/><rect x="603.95" y="419.8" width="0.9" height="18.8" fill="#1c1c1c"/><rect x="606.50" y="419.8" width="0.9" height="18.8" fill="#1c1c1c"/><rect x="609.05" y="419.8" width="0.9" height="18.8" fill="#1c1c1c"/><rect x="611.60" y="419.8" width="0.9" height="18.8" fill="#1c1c1c"/><rect x="614.15" y="419.8" width="0.9" height="18.8" fill="#1c1c1c"/><rect x="616.70" y="419.8" width="0.9" height="18.8" fill="#1c1c1c"/><rect x="619.25" y="419.8" width="0.9" height="18.8" fill="#1c1c1c"/><rect x="621.80" y="419.8" width="0.9" height="18.8" fill="#1c1c1c"/><rect x="624.35" y="419.8" width="0.9" height="18.8" fill="#1c1c1c"/><rect x="626.90" y="419.8" width="0.9" height="18.8" fill="#1c1c1c"/><rect x="629.45" y="419.8" width="0.9" height="18.8" fill="#1c1c1c"/><rect x="632.00" y="419.8" width="0.9" height="18.8" fill="#1c1c1c"/><rect x="634.55" y="419.8" width="0.9" height="18.8" fill="#1c1c1c"/><rect x="637.10" y="419.8" width="0.9" height="18.8" fill="#1c1c1c"/><rect x="639.65" y="419.8" width="0.9" height="18.8" fill="#1c1c1c"/><rect x="642.20" y="419.8" width="0.9" height="18.8" fill="#1c1c1c"/><rect x="644.75" y="419.8" width="0.9" height="18.8" fill="#1c1c1c"/><rect x="590.4" y="419.1" width="54.6" height="0.9" fill="#3b3a22"/><path d="M591 424.8 L611.6 438.4 L609 438.4 L591 426.6 Z" fill="#2a2a2a" opacity=".85"/><rect x="585.1" y="429" width="2.2" height="6.9" fill="#111"/><rect x="754.7" y="429" width="1.7" height="6.9" fill="#111"/><rect x="587.3" y="438.4" width="167.4000000000001" height="6.9" fill="#5c5c58"/><rect x="587.3" y="438.1" width="167.4000000000001" height="0.8" fill="#222"/><rect x="587.3" y="444.9" width="167.4000000000001" height="0.7" fill="#2a2a2a"/><rect x="587.3" y="445.7" width="166.4000000000001" height="1.9" fill="#f0ede0"/><rect x="587.3" y="447.7" width="166.60000000000008" height="0.8" fill="#33332c"/><rect x="587.3" y="448.5" width="166.60000000000008" height="62.5" fill="url(#gstone)"/><rect x="587.3" y="448.5" width="0.7" height="62.5" fill="#55564a"/><rect x="753.3000000000001" y="448.5" width="0.7" height="62.5" fill="#55564a"/><rect x="587.3" y="510.6" width="166.60000000000008" height="0.8" fill="#3c3d34"/><rect x="587.3" y="504.8" width="166.60000000000008" height="0.7" fill="#3a3a34"/><rect x="587.0" y="103" width="0.8" height="345" fill="#3c3c3c" opacity=".8"/><rect x="754.2" y="103" width="0.8" height="345" fill="#3c3c3c" opacity=".8"/></svg>
<span class="t" style="left:680.20px;top:346.49px;font-size:8.9px;line-height:12.46px;letter-spacing:-0.105px;color:#3b2a22;-webkit-text-stroke:0.2px #3b2a22;">Chomono's</span>
<span class="t" style="left:689.00px;top:355.69px;font-size:8.9px;line-height:12.46px;letter-spacing:-0.115px;color:#3b2a22;-webkit-text-stroke:0.2px #3b2a22;">Crepes</span>
<svg width="1024" height="577"><defs><linearGradient id="vcg" x1="0" y1="0" x2="0" y2="1"><stop offset="0" stop-color="#e9e9e9"/><stop offset="1" stop-color="#d9d9d9"/></linearGradient><radialGradient id="vcs"><stop offset="0" stop-color="#999" stop-opacity=".55"/><stop offset=".45" stop-color="#bbb" stop-opacity=".25"/><stop offset="1" stop-color="#ccc" stop-opacity="0"/></radialGradient></defs><ellipse cx="964.5" cy="140.4" rx="40" ry="3" fill="url(#vcs)"/><rect x="950.6" y="111" width="28.2" height="27.6" fill="url(#vcg)" stroke="#cdcdcd" stroke-width="0.8"/><rect x="956" y="117" width="17.5" height="16" fill="#dedede" opacity=".7"/></svg>
<span class="t" style="left:955.00px;top:119.63px;font-size:7.6px;line-height:10.64px;letter-spacing:0.000px;color:#858585;transform:scaleX(0.7527);transform-origin:0 0;">FRONT</span>
<div class="b" style="left:0px;top:530px;width:1024px;height:17.2px;background:#f4f4f4;"></div>
<div class="b" style="left:385px;top:528.9px;width:639px;height:1.4px;background:#f8f8f8;"></div>
<span class="t" style="left:0.20px;top:533.74px;font-size:8.7px;line-height:12.18px;letter-spacing:-0.453px;color:#333;">k to select, TAB for alternates, CTRL adds, SHIFT unselects.</span>
<span class="t" style="left:394.30px;top:517.54px;font-size:8.0px;line-height:11.2px;letter-spacing:0.000px;color:#333;font-family:"Liberation Serif",serif;-webkit-text-stroke:0.15px #333;transform:scaleX(0.9794);transform-origin:0 0;">1/8" = 1'-0"</span>
<span class="t" style="left:581.80px;top:533.14px;font-size:8.7px;line-height:12.18px;letter-spacing:-0.107px;color:#aaaaaa;">Main Model</span>
<span class="t" style="left:527.40px;top:533.70px;font-size:8.2px;line-height:11.48px;letter-spacing:-0.919px;color:#999;">:0</span>
<span class="t" style="left:977.60px;top:533.50px;font-size:8.2px;line-height:11.48px;letter-spacing:-0.419px;color:#888;">:0</span>
<div class="b" style="left:0px;top:547.2px;width:1024px;height:29.8px;background:#e3e3e3;"></div>
<div class="b" style="left:0px;top:546.8px;width:1024px;height:0.9px;background:#cfcfcf;"></div>
<span class="t" style="left:20.50px;top:552.35px;font-size:8.4px;line-height:11.76px;letter-spacing:-0.459px;color:#2a2a2a;">89°F</span>
<span class="t" style="left:20.50px;top:563.15px;font-size:8.4px;line-height:11.76px;letter-spacing:-0.264px;color:#666;">Sunny</span>
<div class="b" style="left:358px;top:553.4px;width:147.4px;height:20.6px;background:#f8f8f8;border-radius:10.3px;border:0.6px solid #dedede;box-sizing:border-box"></div>
<span class="t" style="left:382.00px;top:558.14px;font-size:8.7px;line-height:12.18px;letter-spacing:0.122px;color:#4a4a4a;">Search</span>
<span class="t" style="left:983.00px;top:552.85px;font-size:8.4px;line-height:11.76px;letter-spacing:-0.355px;color:#2a2a2a;">6:23 PM</span>
<span class="t" style="left:975.40px;top:563.45px;font-size:8.4px;line-height:11.76px;letter-spacing:-0.108px;color:#2a2a2a;">10/9/2025</span>
<div class="b" style="left:658.6px;top:549.5px;width:26px;height:26px;background:#f3f3f3;border-radius:3px;border:0.5px solid #dadada;box-sizing:border-box"></div>
<div class="b" style="left:666px;top:574.2px;width:10.4px;height:1.7px;background:#1a78d2;border-radius:1px"></div>
<div class="b" style="left:609.8px;top:574.4px;width:3.4px;height:1.5px;background:#8a8a8a;border-radius:1px"></div>
<svg width="1024" height="577"><defs><linearGradient id="wing" x1="0" y1="0" x2="1" y2="1"><stop offset="0" stop-color="#3cb4f0"/><stop offset="1" stop-color="#0a68cf"/></linearGradient><radialGradient id="sun" cx=".4" cy=".4" r=".7"><stop offset="0" stop-color="#ffb13b"/><stop offset="1" stop-color="#f47b20"/></radialGradient><linearGradient id="tvw" x1="0" y1="0" x2="1" y2="1"><stop offset="0" stop-color="#ffffff"/><stop offset="1" stop-color="#9a9a9a"/></linearGradient><linearGradient id="cop1" x1="0" y1="0" x2="1" y2="1"><stop offset="0" stop-color="#2a7de1"/><stop offset=".5" stop-color="#38c1a0"/><stop offset="1" stop-color="#f2c230"/></linearGradient><linearGradient id="cop2" x1="0" y1="1" x2="1" y2="0"><stop offset="0" stop-color="#f39a2d"/><stop offset=".5" stop-color="#e8508f"/><stop offset="1" stop-color="#a75bdc"/></linearGradient><linearGradient id="edg" x1="0" y1="0" x2="1" y2="1"><stop offset="0" stop-color="#35c1a6"/><stop offset=".5" stop-color="#1b8fdb"/><stop offset="1" stop-color="#0c4fa8"/></linearGradient></defs><circle cx="7.4" cy="562.7" r="6.6" fill="url(#sun)"/><rect x="332.3" y="555.9" width="7.5" height="7.3" fill="url(#wing)"/><rect x="340.5" y="555.9" width="7.5" height="7.3" fill="url(#wing)"/><rect x="332.3" y="563.9" width="7.5" height="7.3" fill="url(#wing)"/><rect x="340.5" y="563.9" width="7.5" height="7.3" fill="url(#wing)"/><circle cx="369.7" cy="562.4" r="3.3" fill="none" stroke="#333" stroke-width="1.1"/><path d="M372 564.9 L374.6 567.6" stroke="#333" stroke-width="1.2" stroke-linecap="round"/><circle cx="473.9" cy="559.8" r="1.9" fill="#f0b020"/><path d="M470.7 568.8 L471.5 562.4 Q473.9 560.6 476.29999999999995 562.4 L477.09999999999997 568.8 Z" fill="#f0b020"/><rect x="473.0" y="562.2" width="1.8" height="6.6" fill="#d98a10"/><circle cx="481.5" cy="559.8" r="1.9" fill="#ef5a6a"/><path d="M478.3 568.8 L479.1 562.4 Q481.5 560.6 483.9 562.4 L484.7 568.8 Z" fill="#ef5a6a"/><rect x="480.6" y="562.2" width="1.8" height="6.6" fill="#d43c52"/><circle cx="489.2" cy="559.8" r="1.9" fill="#3aa7c4"/><path d="M486.0 568.8 L486.8 562.4 Q489.2 560.6 491.59999999999997 562.4 L492.4 568.8 Z" fill="#3aa7c4"/><rect x="488.3" y="562.2" width="1.8" height="6.6" fill="#2a86a6"/><circle cx="497.2" cy="559.8" r="1.9" fill="#f0643a"/><path d="M494.0 568.8 L494.8 562.4 Q497.2 560.6 499.59999999999997 562.4 L500.4 568.8 Z" fill="#f0643a"/><rect x="496.3" y="562.2" width="1.8" height="6.6" fill="#d9452a"/><rect x="514.2" y="560.1" width="12.3" height="10.4" rx="1" fill="#1d1d1d"/><rect x="518.6" y="555.8" width="11.8" height="10.7" rx="1" fill="url(#tvw)"/><path d="M548.5 556 Q552.5 555.4 555.3 556.4 Q557.3 557.4 556.4 560.2 L554.6 565.4 Q553.7 568.5 550.4 568.6 L546.8 568.6 Q543.8 568 544.6 564.6 L546.3 558.6 Q546.9 556.4 548.5 556Z" fill="url(#cop1)"/><path d="M555.3 558 Q559.2 557.6 560.3 560 Q560.8 562 559.6 564.6 L558 568.2 Q556.8 570.6 553.6 570.6 L550.4 570.6 Q547.6 570.2 548.6 567.2 L550.6 561.4 Q551.6 558.4 555.3 558Z" fill="url(#cop2)" opacity=".92"/><path d="M551.2 560.4 L553.8 560.4 L552.4 566.2 L549.8 566.2Z" fill="#fff" opacity=".85"/><path d="M574 557.6 Q574 556.4 575.2 556.4 L579.6 556.4 L581.2 558 L589.2 558 Q590.3 558 590.3 559.2 L590.3 569.4 Q590.3 570.5 589.2 570.5 L575.2 570.5 Q574 570.5 574 569.4Z" fill="#f2b530"/><rect x="574" y="559.4" width="16.3" height="11.1" rx="1" fill="#fad35c"/><rect x="576.6" y="565.6" width="11.2" height="4.9" rx="0.8" fill="#2b86d6"/><rect x="579" y="567.4" width="6.4" height="1.1" fill="#1b5fa8"/><circle cx="611.8" cy="563.2" r="7.9" fill="url(#edg)"/><path d="M606.6 565.4 Q606.6 560.2 611.6 560 Q616.4 560.2 616.8 563.6 Q616.4 566.6 612.6 566.4 Q613.8 565.2 613.4 563.8 Q612.6 562.2 610.8 562.4 Q608.2 563 608.8 566.6 Q609.8 569.6 613.6 570.4 Q609.2 571 607.2 568 Q606.6 566.8 606.6 565.4Z" fill="#dff6ff" opacity=".9"/><path d="M604.2 562 Q605.6 556.4 611.8 555.4 Q618.4 555.8 619.6 561.6 Q617.8 558.4 612.8 558.2 Q607 558.4 604.2 562Z" fill="#4ed0a0" opacity=".9"/><path d="M637.6 558.4 L645.6 556.2 L649.5 559.6 L649.5 567.4 Q649.5 568.6 648.3 568.8 L639.6 569.9 L637.6 568Z" fill="#1f86d8"/><path d="M641 561.6 L649.5 559.8 L649.5 567.6 L641 568.8Z" fill="#56b5f2"/><rect x="632.9" y="558.8" width="9.6" height="9.4" rx="1.2" fill="#0f5fb8"/><ellipse cx="637.7" cy="563.5" rx="2.4" ry="2.8" fill="none" stroke="#fff" stroke-width="1.2"/><path d="M664.2 556.6 Q664.2 555.4 665.4 555.4 L675.4 555.4 L677.8 557.8 L677.8 569.8 Q677.8 571 676.6 571 L665.4 571 Q664.2 571 664.2 569.8Z" fill="#1f6fdc"/><rect x="664.2" y="566.2" width="13.6" height="4.8" fill="#124a9e"/><rect x="668.6" y="568" width="4.8" height="1.2" fill="#cfe0f7"/><path d="M878.9 565.2 L882.5 561.8 L886.1 565.2" fill="none" stroke="#333" stroke-width="1.1"/><path d="M901.2 567.6 Q898.6 567.4 898.6 565 Q898.8 563 900.8 562.8 Q901.2 559.6 904.4 559.6 Q907.2 559.7 907.9 562.2 Q909.5 562.6 909.4 564.6 Q909.3 566 908.2 566.6" fill="none" stroke="#5a5a5a" stroke-width="1.0"/><path d="M902.4 564.4 Q902.6 562.2 904.6 562.2 Q906 562.3 906.6 563.4" fill="none" stroke="#8a8a8a" stroke-width="0.8"/><circle cx="906.2" cy="566.5" r="2.8" fill="#e21b2c"/><rect x="905" y="565.6" width="2.4" height="1.8" rx="0.5" fill="#fff"/><path d="M920.6 562.2 Q925.7 557.2 930.9 562.2" fill="none" stroke="#444" stroke-width="0.9"/><path d="M922.3 563.9 Q925.7 560.4 929.2 563.9" fill="none" stroke="#444" stroke-width="0.9"/><path d="M923.9 565.4 Q925.7 563.6 927.6 565.4" fill="none" stroke="#444" stroke-width="0.9"/><circle cx="925.75" cy="566.6" r="0.8" fill="#444"/><path d="M936.5 562.2 L938.6 562.2 L941.2 559.9 L941.2 567 L938.6 564.7 L936.5 564.7Z" fill="none" stroke="#444" stroke-width="0.9" stroke-linejoin="round"/><path d="M943.2 561.9 L946.4 565.1 M946.4 561.9 L943.2 565.1" stroke="#444" stroke-width="0.9"/><rect x="953.2" y="560.8" width="9.4" height="5.6" rx="0.9" fill="#2e2e2e"/><rect x="962.6" y="562.4" width="1.3" height="2.6" fill="#2e2e2e"/><path d="M955.2 558.7 L955.2 561 M954 559.8 L956.6 559.8" stroke="#2e2e2e" stroke-width="0.9"/><rect x="954.6" y="562" width="6.4" height="3.2" fill="#6d6d6d"/></svg>
<span class="t" style="left:668.00px;top:554.71px;font-size:8.6px;line-height:12.04px;letter-spacing:-0.011px;color:#ffffff;font-weight:bold;">R</span>
<svg width="1024" height="14" viewBox="0 0 1024 14"><rect x="6.2" y="-2" width="9.2" height="10" fill="#f2f2f2" stroke="#555" stroke-width="1"/><rect x="6.2" y="-1" width="9.2" height="1.6" fill="#6b7f99"/><path d="M9.7 0 V8" stroke="#555" stroke-width="0.9"/><rect x="11" y="2.4" width="3" height="2.6" fill="#888"/><path d="M24.6 -1 L24.6 6.9 L32.6 6.9 L34.6 2.6 L33 2.6 L33 0.8 L29.4 0.8 L28.6 -0.4 Z" fill="#f5f5f5" stroke="#666" stroke-width="0.9" stroke-linejoin="round"/><path d="M24.8 6.8 L26.8 2.6 L34.6 2.6" fill="none" stroke="#666" stroke-width="0.8"/><rect x="41.3" y="-2" width="9.4" height="9.9" rx="0.8" fill="#595959"/><rect x="43.4" y="-2" width="5.2" height="4.4" fill="#e4e4e4"/><rect x="43.4" y="5.4" width="5.2" height="1.5" fill="#d0d0d0"/><circle cx="60.4" cy="3.6" r="3.2" fill="none" stroke="#bdbdbd" stroke-width="1"/><circle cx="64.6" cy="5.6" r="2.2" fill="#cfcfcf" stroke="#bdbdbd" stroke-width="0.8"/><path d="M62 0 L66.6 0 L66.6 3" fill="none" stroke="#c2c2c2" stroke-width="0.9"/><path d="M73.2 2.6 L76.1 2.6 L74.65 4.5Z" fill="#333"/><path d="M81.6 3.4 L85.6 0.6 L85.6 2.2 Q91.6 1.6 91.6 5.8 Q90.2 4.2 85.6 4.6 L85.6 6.2 Z" fill="#f4f4f4" stroke="#666" stroke-width="0.8" stroke-linejoin="round"/><path d="M97 2.6 L99.9 2.6 L98.45 4.5Z" fill="#333"/><path d="M115.8 3.4 L111.8 0.6 L111.8 2.2 Q105.8 1.6 105.8 5.8 Q107.2 4.2 111.8 4.6 L111.8 6.2 Z" fill="#e6e6e6" stroke="#c2c2c2" stroke-width="0.8" stroke-linejoin="round"/><path d="M121.3 2.6 L124.3 2.6 L122.8 4.5Z" fill="#333"/><rect x="132" y="-2" width="6.6" height="4.2" fill="#fafafa" stroke="#888" stroke-width="0.7"/><rect x="129.8" y="1.8" width="11" height="4.6" rx="0.8" fill="#7d7d7d"/><rect x="132" y="4.6" width="6.6" height="3.8" fill="#48a4ec" stroke="#666" stroke-width="0.5"/><rect x="146.2" y="-2" width="8.8" height="10.7" fill="#d9525f"/><rect x="148.4" y="2.6" width="4.6" height="4.4" fill="#f5d5d8"/><rect x="149.4" y="3.6" width="2" height="2.4" fill="#d9525f"/><circle cx="153.8" cy="-0.2" r="2" fill="#2f8fe6"/><rect x="162" y="0" width="0.8" height="10.6" fill="#c2c2c2"/><path d="M167.4 6 L167.4 0.5 L176.6 0.5 L176.6 2" fill="none" stroke="#555" stroke-width="1.1"/><path d="M174.2 3 L177.4 3 L177 5 L178 6.4 L173.6 6.4 L174.6 5 Z" fill="#e9a41a"/><rect x="175.4" y="6.2" width="0.8" height="2.4" fill="#8a6a1a"/><rect x="183" y="0" width="0.8" height="10.6" fill="#c2c2c2"/><rect x="188.2" y="-1" width="10.2" height="6" fill="#f5f5f5"/><rect x="188.2" y="1" width="10.2" height="1.1" fill="#777"/><rect x="188.2" y="4.9" width="10.2" height="2.4" fill="#f0a314"/><path d="M204.7 2.6 L207.6 2.6 L206.14999999999998 4.5Z" fill="#333"/><path d="M213.4 0 L222 7 M220.2 8.2 L223.4 5.4 M212 1.2 L215 -1" stroke="#b0b0b0" stroke-width="0.9" fill="none"/><circle cx="235.4" cy="2.2" r="2.6" fill="#eee" stroke="#666" stroke-width="0.8"/><path d="M235.4 0.8 V3.6" stroke="#555" stroke-width="0.7"/><path d="M232.8 2.6 L230.2 3.4 L229.8 7" fill="none" stroke="#666" stroke-width="0.8"/><circle cx="229.8" cy="7" r="0.8" fill="#555"/><rect x="261.3" y="0" width="0.8" height="10.6" fill="#c2c2c2"/><path d="M266.6 2.6 L271.4 -2.2 L276.2 2.6 L275 2.6 L275 7.8 L267.8 7.8 L267.8 2.6Z" fill="#f3f3f3" stroke="#6a6a6a" stroke-width="0.9" stroke-linejoin="round"/><rect x="270.4" y="4.4" width="2" height="3.4" fill="#e8a33a"/><path d="M272.6 -1 L276.2 2.6 L275 2.6 L275 7.8 L273.4 7.8 L273.4 1Z" fill="#9a9a9a" opacity=".7"/><path d="M282.7 2.6 L285.8 2.6 L284.25 4.5Z" fill="#333"/><circle cx="295" cy="2.4" r="3.3" fill="none" stroke="#bdbdbd" stroke-width="0.9"/><path d="M297.8 0.4 L300 2.4 L297.8 4.4 M295 5.8 V8.4 M293.8 8.2 H296.2" fill="none" stroke="#bdbdbd" stroke-width="0.9"/><rect x="307" y="0" width="4.4" height="1.2" fill="#555"/><rect x="311.4" y="0.2" width="6.4" height="0.7999999999999999" fill="#9c9c9c"/><rect x="307" y="3.4" width="4.4" height="1.2" fill="#555"/><rect x="311.4" y="3.6" width="6.4" height="0.7999999999999999" fill="#9c9c9c"/><rect x="307" y="6.6" width="4.4" height="1.2" fill="#555"/><rect x="311.4" y="6.8" width="6.4" height="0.7999999999999999" fill="#9c9c9c"/><path d="M313.4 -0.5 L309.8 8.6" stroke="#49a4ea" stroke-width="1.2"/><rect x="323.3" y="0" width="0.8" height="10.6" fill="#c2c2c2"/><rect x="329" y="-2" width="6.8" height="4" fill="#e9e9e9" stroke="#888" stroke-width="0.7"/><rect x="330.8" y="1.4" width="5.6" height="6.2" fill="#ececec" stroke="#888" stroke-width="0.7"/><path d="M333 3 V7.6 M331 4.6 H336" stroke="#999" stroke-width="0.5"/><path d="M334.4 4.8 L338.2 8.4 M338.2 4.8 L334.4 8.4" stroke="#e8262e" stroke-width="1.2"/><rect x="344.6" y="-2" width="6.4" height="7.4" fill="#eee" stroke="#555" stroke-width="0.8"/><rect x="348.6" y="1.6" width="6.2" height="5.6" fill="#f4f4f4" stroke="#555" stroke-width="0.8"/><rect x="348.6" y="1.6" width="6.2" height="1.3" fill="#555"/><path d="M345 6 V7.4 H346.8" fill="none" stroke="#333" stroke-width="0.7"/><path d="M359 2.6 L362.1 2.6 L360.55 4.5Z" fill="#333"/><rect x="367.8" y="1" width="5.8" height="1" fill="#333"/><path d="M367.8 3 L373.6 3 L370.70000000000005 5.6Z" fill="#333"/><path d="M787.6 1.2 L787.6 5.8 L784.9 3.5Z" fill="#2a2a2a"/><rect x="793.5" y="1.4" width="4.8" height="6.6" rx="1" fill="#d8d8d8" stroke="#3a3a3a" stroke-width="1.1"/><rect x="800.1" y="1.4" width="4.8" height="6.6" rx="1" fill="#d8d8d8" stroke="#3a3a3a" stroke-width="1.1"/><rect x="794.8" y="-1.4" width="3" height="3.4" fill="#555"/><rect x="800.6" y="-1.4" width="3" height="3.4" fill="#555"/><rect x="798" y="2.6" width="2.4" height="1.8" fill="#444"/><path d="M812.6 -2 L818.4 -2 L818.2 2.6 Q817.6 4.6 819.6 5.8 L820.4 7.6 L810.6 7.6 L811.4 5.8 Q813.4 4.6 812.8 2.6Z" fill="#3f7fd0"/><path d="M814.4 -2 L816.6 -2 L816.6 4 Q815.5 5 814.4 4Z" fill="#6aa3e8" opacity=".8"/><rect x="810.4" y="7.6" width="10.4" height="0.9" fill="#444"/><path d="M881.9 2.6 L885 2.6 L883.45 4.3Z" fill="#333"/><path d="M892.6 0.2 L894.6 0.2 L896 5 L902 5 L903.2 1.2 L895 1.2" fill="none" stroke="#2d6cc0" stroke-width="1.1" stroke-linejoin="round"/><path d="M896 1.6 L902.6 1.6 L901.6 4.6 L896.6 4.6Z" fill="#8fb6e8"/><circle cx="896.8" cy="7.2" r="1" fill="#2d6cc0"/><circle cx="901.2" cy="7.2" r="1" fill="#2d6cc0"/><rect x="909.2" y="0" width="0.8" height="10" fill="#c8c8c8"/><circle cx="921.4" cy="3" r="5.3" fill="#f2f2f2" stroke="#666" stroke-width="0.9"/><path d="M932.4 2.6 L935.5 2.6 L933.95 4.3Z" fill="#333"/><rect x="980.2" y="5.6" width="5.6" height="1.6" fill="#333"/><rect x="998.4" y="-1" width="5.4" height="5.4" fill="none" stroke="#444" stroke-width="0.9"/><rect x="995.8" y="2.8" width="5.8" height="4.4" fill="#eee" stroke="#444" stroke-width="0.9"/><rect x="995.4" y="2.4" width="6.6" height="1.3" fill="#444"/><path d="M1013.2 -0.4 L1020.4 7 M1020.4 -0.4 L1013.2 7" stroke="#333" stroke-width="1.4"/></svg>
<span class="t" style="left:919.20px;top:-3.15px;font-size:8.4px;line-height:11.76px;letter-spacing:-0.731px;color:#2d62c4;font-weight:bold;">?</span>
<span class="t" style="left:245.2px;top:-7.9px;font-size:15.6px;line-height:18px;color:#555;letter-spacing:0">A</span>
<svg width="1024" height="577"><rect x="642.4" y="18.2" width="9.4" height="5.4" rx="1.5" fill="#f0f0f0" stroke="#666" stroke-width="0.9"/><path d="M645.4 21.9 L647.2 20 L649 21.9Z" fill="#444"/><path d="M655.6 20 L658.9 20 L657.25 22.4Z" fill="#333"/></svg>
<svg width="1024" height="577"><path d="M2.2 106.4 L2.2 98.6 L9.1 91.2 L15.4 98.4 L15.4 106.4Z" fill="#f8f8f8" stroke="#7a7a7a" stroke-width="0.9" stroke-linejoin="round"/><path d="M15.4 98.4 L20.8 95.2 L20.8 103.4 L15.4 106.4Z" fill="#cbcbcb" stroke="#7a7a7a" stroke-width="0.8" stroke-linejoin="round"/><path d="M9.1 90.6 L13.2 87 L21.6 94.6 L16.6 99.6Z" fill="#8e8e8e" stroke="#7a7a7a" stroke-width="0.6" stroke-linejoin="round"/><path d="M1.4 99.2 L9.1 90.8 L16.4 99.4" fill="none" stroke="#6f6f6f" stroke-width="1.1" stroke-linejoin="round"/><rect x="7" y="99.4" width="3.8" height="6.9" fill="#f0b232" stroke="#a88a50" stroke-width="0.4"/><rect x="335.4" y="124" width="7.8" height="8.6" fill="#fafafa" stroke="#555" stroke-width="0.8"/><path d="M339.2 124 V132.6 M335.4 128 H343.2" stroke="#555" stroke-width="0.7"/><rect x="340" y="128.8" width="2.6" height="3" fill="#3b8de0"/><path d="M11.6 502.4 V510.4 M10.4 509.2 L11.6 510.8 L12.8 509.2" fill="none" stroke="#333" stroke-width="0.8"/><path d="M27.6 502.4 V510.4 M26.4 509.2 L27.6 510.8 L28.8 509.2" fill="none" stroke="#333" stroke-width="0.8"/><rect x="390" y="63.2" width="7.6" height="9.4" fill="#d9d9d9" stroke="#e6e6e6" stroke-width="0.8"/><rect x="393.6" y="66" width="6.6" height="6.6" fill="#d4d4d4" stroke="#e6e6e6" stroke-width="0.8"/><path d="M477.6 72.4 L477.6 67.6 L476.4 67.6 L481.2 63.2 L486 67.6 L484.8 67.6 L484.8 72.4Z" fill="#f4f4f4" stroke="#707070" stroke-width="0.9" stroke-linejoin="round"/><path d="M482.4 64.6 L486 67.8 L484.8 67.8 L484.8 72.4 L483.2 72.4 L483.2 66.4Z" fill="#9a9a9a" opacity=".7"/><rect x="480" y="68.6" width="2.1" height="3.8" fill="#dfa040"/><rect x="439.8" y="519.4" width="10.4" height="8" fill="#6b6b6b"/><rect x="440.9" y="520.5" width="8.2" height="5.8" fill="#f3f3f3"/><rect x="443" y="520.5" width="4" height="1.8" fill="#8a8a8a"/><rect x="443" y="524.5" width="4" height="1.8" fill="#8a8a8a"/><rect x="440.9" y="522.3" width="2.1" height="2.2" fill="#8a8a8a"/><rect x="447" y="522.3" width="2.1" height="2.2" fill="#8a8a8a"/><path d="M456.3 521 L459 518.6 L465.8 518.6 L465.8 525.4 L463 527.9 L456.3 527.9Z" fill="#3b8ee8"/><rect x="457.3" y="521.8" width="5.2" height="5.2" fill="#9ccaf6"/><rect x="457.6" y="522.4" width="4.6" height="1.4" fill="#e0303a"/><rect x="457.6" y="524.8" width="4.6" height="1.4" fill="#38a558"/><path d="M456.3 521 L463 521 L465.8 518.6 M463 521 V527.9" fill="none" stroke="#1f62b8" stroke-width="0.6"/><circle cx="476.2" cy="522" r="2.3" fill="#f5a623"/><path d="M476.2 518 V519 M476.2 525 V526 M472.2 522 H473.2 M473.4 519.2 L474.1 519.9 M479 519.2 L478.3 519.9 M473.4 524.8 L474.1 524.1" stroke="#f5a623" stroke-width="0.8"/><circle cx="480.6" cy="524.3" r="2.35" fill="#4fc1d6"/><rect x="479.90000000000003" y="526.4499999999999" width="1.4" height="1.6" fill="#777"/><circle cx="491.6" cy="521.2" r="3" fill="#f0f0f0" stroke="#999" stroke-width="0.8"/><path d="M489.2 526.8 H494 M491.6 524.2 V526.8" stroke="#999" stroke-width="0.8"/><circle cx="496.7" cy="524.3" r="2.35" fill="#4fc1d6"/><rect x="496.0" y="526.4499999999999" width="1.4" height="1.6" fill="#777"/><path d="M505.2 520.6 L507.4 521.8 Q507.4 525.6 510.6 525.8 Q514 525.6 514 521.8 L515.8 520.8 M507.6 521.4 H513.8 M510.6 519.4 V521.2" fill="none" stroke="#888" stroke-width="0.8"/><circle cx="512.8" cy="524.1" r="2.35" fill="#4fc1d6"/><rect x="512.0999999999999" y="526.25" width="1.4" height="1.6" fill="#777"/><path d="M523.6 526 V521.2 H529.6" fill="none" stroke="#555" stroke-width="1.2"/><path d="M526.6 518 V519.6 M521 524.4 H522.6" stroke="#2f8fe6" stroke-width="1"/><path d="M527.4 524 L531.2 527.8 M531.2 524 L527.4 527.8" stroke="#e8262e" stroke-width="1.2"/><path d="M539.8 526 V521.2 H545.8" fill="none" stroke="#555" stroke-width="1.2"/><path d="M542.8 518 V519.6 M537.2 524.4 H538.8" stroke="#2f8fe6" stroke-width="1"/><circle cx="545.2" cy="524.1" r="2.35" fill="#4fc1d6"/><rect x="544.5" y="526.25" width="1.4" height="1.6" fill="#777"/><path d="M555.2 527.6 L555.2 522.8 L554 522.8 L558.8 518.2 L563.6 522.8 L562.4 522.8 L562.4 524" fill="none" stroke="#777" stroke-width="0.9" stroke-linejoin="round"/><path d="M555.2 527.6 H559.6" stroke="#777" stroke-width="0.9"/><rect x="559.8" y="524.6" width="4.2" height="3.6" fill="#3aa0e0"/><path d="M560.8 524.6 V523.6 Q561.9 522.4 563 523.6 V524.6" fill="none" stroke="#3aa0e0" stroke-width="0.7"/><circle cx="572.8" cy="524.6" r="1.9" fill="none" stroke="#6a6a6a" stroke-width="0.8"/><circle cx="577" cy="524.6" r="1.9" fill="none" stroke="#6a6a6a" stroke-width="0.8"/><path d="M570.9 524 L572.4 520.6 M578.9 524 L577.4 520.6 M574.6 524.2 H575.2" stroke="#6a6a6a" stroke-width="0.8" fill="none"/><circle cx="591.3" cy="521.9" r="2.6" fill="#4fc1d6"/><rect x="590.5999999999999" y="524.3" width="1.4" height="1.6" fill="#777"/><rect x="590.6" y="525.8" width="1.4" height="1.2" fill="#999"/><path d="M603.4 519.8 H609.4 L611.4 521.8 V524 M603.4 519.8 V526 H607" fill="none" stroke="#9a9a9a" stroke-width="0.8"/><path d="M608.4 527 H612 V523.6" fill="none" stroke="#aaa" stroke-width="0.7" stroke-dasharray="1.2 0.8"/><path d="M619 527.6 V520.6 L621.8 518.4 H628.6 V521 M619 520.6 H626 V527.6 M626 520.6 L628.6 518.4 M619 524 H626 M622.4 520.6 V527.6" fill="none" stroke="#8a8a8a" stroke-width="0.7"/><path d="M620.2 524.6 V527.6 M621.6 524.6 V527.6 M623.4 525 V527.6" stroke="#e0303a" stroke-width="0.7"/><circle cx="626.9" cy="524.1" r="2.35" fill="#4fc1d6"/><rect x="626.1999999999999" y="526.25" width="1.4" height="1.6" fill="#777"/><path d="M636 521.6 L638.4 519.6 L644.6 519.6 L644.6 524.6 L642.2 526.6 L636 526.6Z" fill="#3a7fd0"/><rect x="637" y="522.4" width="4.4" height="3.4" fill="#eef3fa"/><path d="M635.6 523 H636.8 M635.6 524.6 H636.8" stroke="#3a7fd0" stroke-width="0.6"/><path d="M650.8 518.4 V525 M660 518.4 V521 M650.8 519.6 H660 M650.8 523.6 H656" fill="none" stroke="#777" stroke-width="0.8"/><circle cx="658.9" cy="524.2" r="2.35" fill="#4fc1d6"/><rect x="658.1999999999999" y="526.35" width="1.4" height="1.6" fill="#777"/><rect x="358.4" y="534.6" width="4" height="6.8" rx="1" fill="#3a88d8"/><circle cx="365.8" cy="534.4" r="1.9" fill="#e8a050"/><path d="M363.4 541.4 Q365.8 535.2 368.4 541.4 Z" fill="#e8a050"/><rect x="361.2" y="536.8" width="4.2" height="7" rx="0.8" fill="#35a852"/><path d="M366.2 539.4 L369.6 541.6 L366.2 543.8Z" fill="#2f8fe6"/><path d="M505 538.6 L507 540.6 L509 538.6" fill="none" stroke="#bcbcbc" stroke-width="0.8"/><path d="M708.8 538.4 L711 540.6 L713.2 538.4" fill="none" stroke="#c4c4c4" stroke-width="0.8"/><rect x="521.4" y="533.4" width="4.6" height="3.4" fill="#f4f4f4" stroke="#888" stroke-width="0.8"/><path d="M521.4 538.4 L518.2 538.4 L517.6 543.4 L524 543.4 L523.4 540.4 M521.6 538.4 Q521.8 536.8 523 536.8" fill="none" stroke="#888" stroke-width="0.8"/><rect x="549" y="533.8" width="10" height="9.8" fill="#f6f6f6" stroke="#4a4a4a" stroke-width="0.9"/><rect x="549" y="533.8" width="10" height="1.8" fill="#4a4a4a"/><path d="M550.6 537.6 H551.6 M552.6 537.6 H557.6 M550.6 539.6 H551.6 M552.6 539.6 H557.6 M550.6 541.6 H551.6 M552.6 541.6 H557.6" stroke="#4a4a4a" stroke-width="0.8"/><rect x="567" y="533.8" width="8.6" height="7.6" fill="#eee" stroke="#a0a0a0" stroke-width="0.8"/><path d="M568.6 536 H574 M568.6 538 H574 M568.6 540 H574" stroke="#a8a8a8" stroke-width="0.7"/><path d="M565.4 543.2 H571 M569.6 542 L571 543.2 L569.6 544.4" fill="none" stroke="#8a8a8a" stroke-width="0.8"/><path d="M874.4 535 Q873.8 533.4 871.8 533.4 Q869.4 533.6 869.4 534.9 Q869.6 536.2 871.8 536.2 Q873.4 536 874.4 534.6 Q875.4 533.4 877 533.4 Q879 533.6 879 534.9 Q878.8 536.2 877 536.2 Q875 536 874.4 535" fill="none" stroke="#e2a062" stroke-width="0.9"/><path d="M875.4 537 L875.4 542 L876.6999999999999 540.9 L877.6999999999999 542.8 L878.5 542.4 L877.6 540.6 L879.1999999999999 540.4Z" fill="#f4f4f4" stroke="#555" stroke-width="0.7" stroke-linejoin="round"/><path d="M885.8 536.6 L889.6 534.2 L891.4 536.6Z" fill="#3a78d0"/><rect x="885.8" y="538" width="5.6" height="1.2" fill="#3a78d0"/><rect x="886.6" y="540" width="4" height="1" fill="#6a9be0"/><path d="M892 533.6 L895.6 537.2 M895.6 533.6 L892 537.2" stroke="#e8262e" stroke-width="1.1"/><path d="M891.6 538.2 L891.6 543.2 L892.9 542.1 L893.9 544.0 L894.7 543.6 L893.8000000000001 541.8000000000001 L895.4 541.6Z" fill="#f4f4f4" stroke="#555" stroke-width="0.7" stroke-linejoin="round"/><path d="M903.4 533.6 H907.6 L906.8 535 V536.6 L908 537.8 H903 L904.2 536.6 V535Z" fill="#f0f0f0" stroke="#777" stroke-width="0.7" stroke-linejoin="round"/><path d="M905.5 537.8 V540.4" stroke="#777" stroke-width="0.7"/><path d="M907.4 538 L907.4 543 L908.6999999999999 541.9 L909.6999999999999 543.8 L910.5 543.4 L909.6 541.6 L911.1999999999999 541.4Z" fill="#f4f4f4" stroke="#555" stroke-width="0.7" stroke-linejoin="round"/><path d="M918.2 536.4 L922.4 534.6 L922.4 542 L918.2 543.6Z" fill="#3a8ee0"/><path d="M924 533.4 L927.6 537 M927.6 533.4 L924 537" stroke="#e8262e" stroke-width="1.1"/><path d="M923.4 538.2 L923.4 543.2 L924.6999999999999 542.1 L925.6999999999999 544.0 L926.5 543.6 L925.6 541.8000000000001 L927.1999999999999 541.6Z" fill="#f4f4f4" stroke="#555" stroke-width="0.7" stroke-linejoin="round"/><path d="M938 533.4 V541 M934.6 537.2 H941.4 M937 534.6 L938 533.4 L939 534.6 M937 539.8 L938 541 L939 539.8 M935.8 536.2 L934.6 537.2 L935.8 538.2" fill="none" stroke="#333" stroke-width="0.8"/><path d="M940.2 538.4 L940.2 543.4 L941.5 542.3 L942.5 544.1999999999999 L943.3000000000001 543.8 L942.4000000000001 542.0 L944.0 541.8Z" fill="#f4f4f4" stroke="#333" stroke-width="0.7" stroke-linejoin="round"/><circle cx="955.7" cy="538.5" r="4.3" fill="none" stroke="#c9c9c9" stroke-width="1" stroke-dasharray="1.1 1.6"/><path d="M966.4 533.6 H976.6 L972.6 538.4 V543.6 L970.4 542.6 V538.4Z" fill="#f0f0f0" stroke="#777" stroke-width="0.9" stroke-linejoin="round"/></svg>
<span class="t" style="left:4.80px;top:500.27px;font-size:5.6px;line-height:7.84px;letter-spacing:-0.244px;color:#3a8ee0;font-weight:bold;">A</span>
<span class="t" style="left:4.80px;top:504.87px;font-size:5.6px;line-height:7.84px;letter-spacing:0.379px;color:#333;font-weight:bold;">Z</span>
<span class="t" style="left:21.00px;top:500.27px;font-size:5.6px;line-height:7.84px;letter-spacing:0.379px;color:#333;font-weight:bold;">Z</span>
<span class="t" style="left:21.00px;top:504.87px;font-size:5.6px;line-height:7.84px;letter-spacing:-0.244px;color:#3a8ee0;font-weight:bold;">A</span>
</div></body></html>
